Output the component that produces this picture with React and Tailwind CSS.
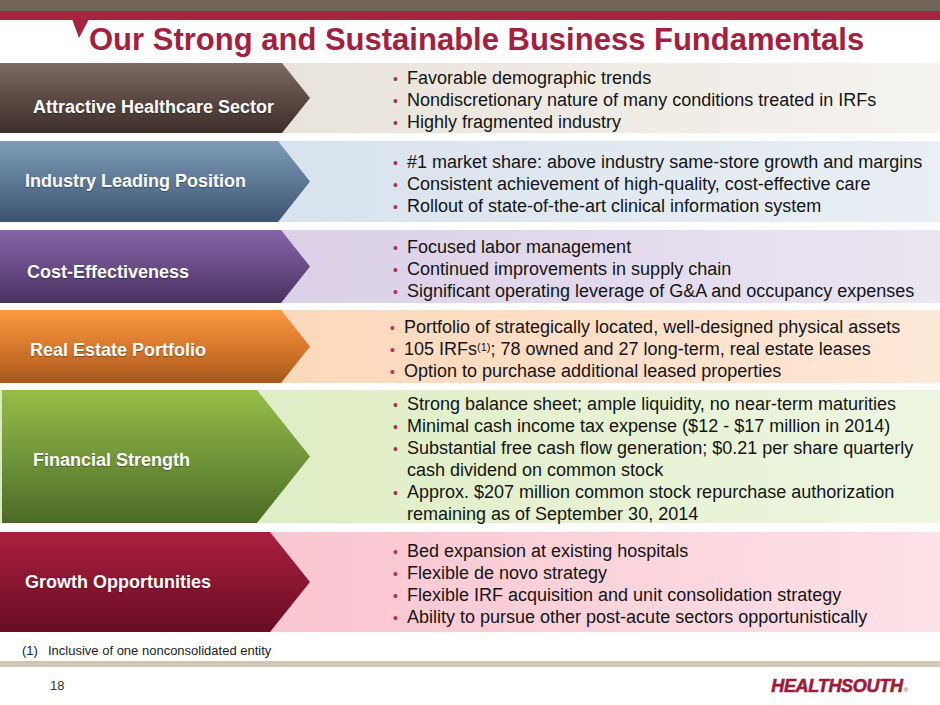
import React from 'react';

const rows = [
  {
    label: 'Attractive Healthcare Sector',
    h: 'h-[70px]',
    mt: 'mt-[1px]',
    bg: 'bg-[linear-gradient(90deg,#e4ddd1_0%,#ece8e0_50%,#f5f3ef_100%)]',
    arrow: 'bg-[linear-gradient(180deg,#7d6c64_0%,#5b4a43_50%,#3d2e29_100%)] [clip-path:polygon(0_0,282px_0,310px_50%,282px_100%,0_100%)]',
    labelPad: 'pl-[33px] pt-[18px]',
    bullets: [
      ['Favorable demographic trends'],
      ['Nondiscretionary nature of many conditions treated in IRFs'],
      ['Highly fragmented industry'],
    ],
  },
  {
    label: 'Industry Leading Position',
    h: 'h-[81px]',
    mt: 'mt-[8px]',
    bg: 'bg-[linear-gradient(90deg,#d1deeb_0%,#dde6ef_50%,#e9eff5_100%)]',
    arrow: 'bg-[linear-gradient(180deg,#7f9dbb_0%,#5d7895_50%,#3c5470_100%)] [clip-path:polygon(0_0,278px_0,310px_50%,278px_100%,0_100%)]',
    labelPad: 'pl-[25px] pb-[2px]',
    bullets: [
      ['#1 market share: above industry same-store growth and margins'],
      ['Consistent achievement of high-quality, cost-effective care'],
      ['Rollout of state-of-the-art clinical information system'],
    ],
  },
  {
    label: 'Cost-Effectiveness',
    h: 'h-[73px]',
    mt: 'mt-[8px]',
    bg: 'bg-[linear-gradient(90deg,#d5c8e3_0%,#dfd6ea_50%,#ebe6f2_100%)]',
    arrow: 'bg-[linear-gradient(180deg,#8864a8_0%,#694b86_50%,#483260_100%)] [clip-path:polygon(0_0,281px_0,310px_50%,281px_100%,0_100%)]',
    labelPad: 'pl-[27px] pt-[10px]',
    bullets: [
      ['Focused labor management'],
      ['Continued improvements in supply chain'],
      ['Significant operating leverage of G&A and occupancy expenses'],
    ],
  },
  {
    label: 'Real Estate Portfolio',
    h: 'h-[73px]',
    mt: 'mt-[7px]',
    bg: 'bg-[linear-gradient(90deg,#fdd3b1_0%,#fddcc2_50%,#fee8d7_100%)]',
    arrow: 'bg-[linear-gradient(180deg,#fa9b3f_0%,#d8782c_50%,#a6581c_100%)] [clip-path:polygon(0_0,281px_0,310px_50%,281px_100%,0_100%)]',
    labelPad: 'pl-[30px] pt-[6px]',
    bulletPad: 'ml-[80px]',
    bullets: [
      ['Portfolio of strategically located, well-designed physical assets'],
      ['IRFS'],
      ['Option to purchase additional leased properties'],
    ],
  },
  {
    label: 'Financial Strength',
    h: 'h-[133px]',
    mt: 'mt-[7px]',
    bg: 'bg-[linear-gradient(90deg,#dbebbd_0%,#e3f0cd_50%,#eef6e1_100%)]',
    arrow: 'bg-[linear-gradient(180deg,#96be46_0%,#71963a_50%,#4b6b24_100%)] [clip-path:polygon(2px_0,257px_0,310px_50%,257px_100%,2px_100%)]',
    labelPad: 'pl-[33px] pt-[6px]',
    bullets: [
      ['Strong balance sheet; ample liquidity, no near-term maturities'],
      ['Minimal cash income tax expense ($12 - $17 million in 2014)'],
      ['Substantial free cash flow generation; $0.21 per share quarterly', 'cash dividend on common stock'],
      ['Approx. $207 million common stock repurchase authorization', 'remaining as of September 30, 2014'],
    ],
  },
  {
    label: 'Growth Opportunities',
    h: 'h-[100px]',
    mt: 'mt-[9px]',
    bg: 'bg-[linear-gradient(90deg,#fabdc9_0%,#fbcdd6_50%,#fde2e8_100%)]',
    arrow: 'bg-[linear-gradient(180deg,#ac1e40_0%,#8a1631_50%,#660c21_100%)] [clip-path:polygon(0_0,270px_0,310px_50%,270px_100%,0_100%)]',
    labelPad: 'pl-[25px]',
    bullets: [
      ['Bed expansion at existing hospitals'],
      ['Flexible de novo strategy'],
      ['Flexible IRF acquisition and unit consolidation strategy'],
      ['Ability to pursue other post-acute sectors opportunistically'],
    ],
  },
];

const BulletText = ({ lines }) => {
  if (lines[0] === 'IRFS') {
    return (
      <span>
        105 IRFs<sup className="text-[11px] leading-none relative -top-[4px]">(1)</sup>; 78 owned and 27 long-term, real estate leases
      </span>
    );
  }
  return (
    <span>
      {lines.map((l, i) => (
        <span key={i} className="block">{l}</span>
      ))}
    </span>
  );
};

const Row = ({ row }) => (
  <div className={`flex ${row.h} ${row.mt} ${row.bg}`}>
    <div className={`w-[310px] shrink-0 flex items-center ${row.arrow} ${row.labelPad}`}>
      <span className="text-white font-bold text-[18px] leading-none whitespace-nowrap [text-shadow:0_1px_1px_rgba(0,0,0,0.35)]">
        {row.label}
      </span>
    </div>
    <div className={`flex flex-col justify-center pt-[4px] ${row.bulletPad || 'ml-[83px]'}`}>
      {row.bullets.map((b, i) => (
        <div key={i} className="flex items-baseline text-[18px] leading-[22px] text-[#141414] whitespace-nowrap">
          <span className="w-[14px] shrink-0 text-[#b0304f] text-[14px] leading-[10px]">•</span>
          <BulletText lines={b} />
        </div>
      ))}
    </div>
  </div>
);

export default function App() {
  return (
    <div className="w-[940px] h-[705px] bg-white relative overflow-hidden font-['Liberation_Sans',Arial,sans-serif]">
      <div className="h-[11px] bg-[#71625a]" />
      <div className="h-[9px] bg-[#a5243f]" />
      <svg className="absolute left-[72px] top-[19px]" width="17" height="20" viewBox="0 0 17 20">
        <polygon points="0,0 17,0 7,19" fill="#a5243f" />
      </svg>
      <div className="h-[42px] pl-[89px] pt-[1px]">
        <h1 className="text-[31px] leading-[38px] font-bold text-[#a4203f] whitespace-nowrap">
          Our Strong and Sustainable Business Fundamentals
        </h1>
      </div>

      {rows.map((r) => (
        <Row key={r.label} row={r} />
      ))}

      <div className="h-[29px] flex items-center pl-[22px] pt-[8px] text-[13px] text-[#222]">
        <span className="w-[26px]">(1)</span>
        <span>Inclusive of one nonconsolidated entity</span>
      </div>
      <div className="h-[6px] bg-[#cdc6b5]" />
      <div className="flex items-center justify-between h-[38px] pl-[50px] pr-[32px]">
        <span className="text-[13px] text-[#333]">18</span>
        <span className="flex items-end">
          <span className="text-[18px] leading-none font-bold italic tracking-[-0.3px] text-[#9e1b3b] [-webkit-text-stroke:0.6px_#9e1b3b]">
            HEALTHSOUTH
          </span>
          <span className="text-[6px] text-[#9e1b3b] ml-[1px]">®</span>
        </span>
      </div>
    </div>
  );
}
